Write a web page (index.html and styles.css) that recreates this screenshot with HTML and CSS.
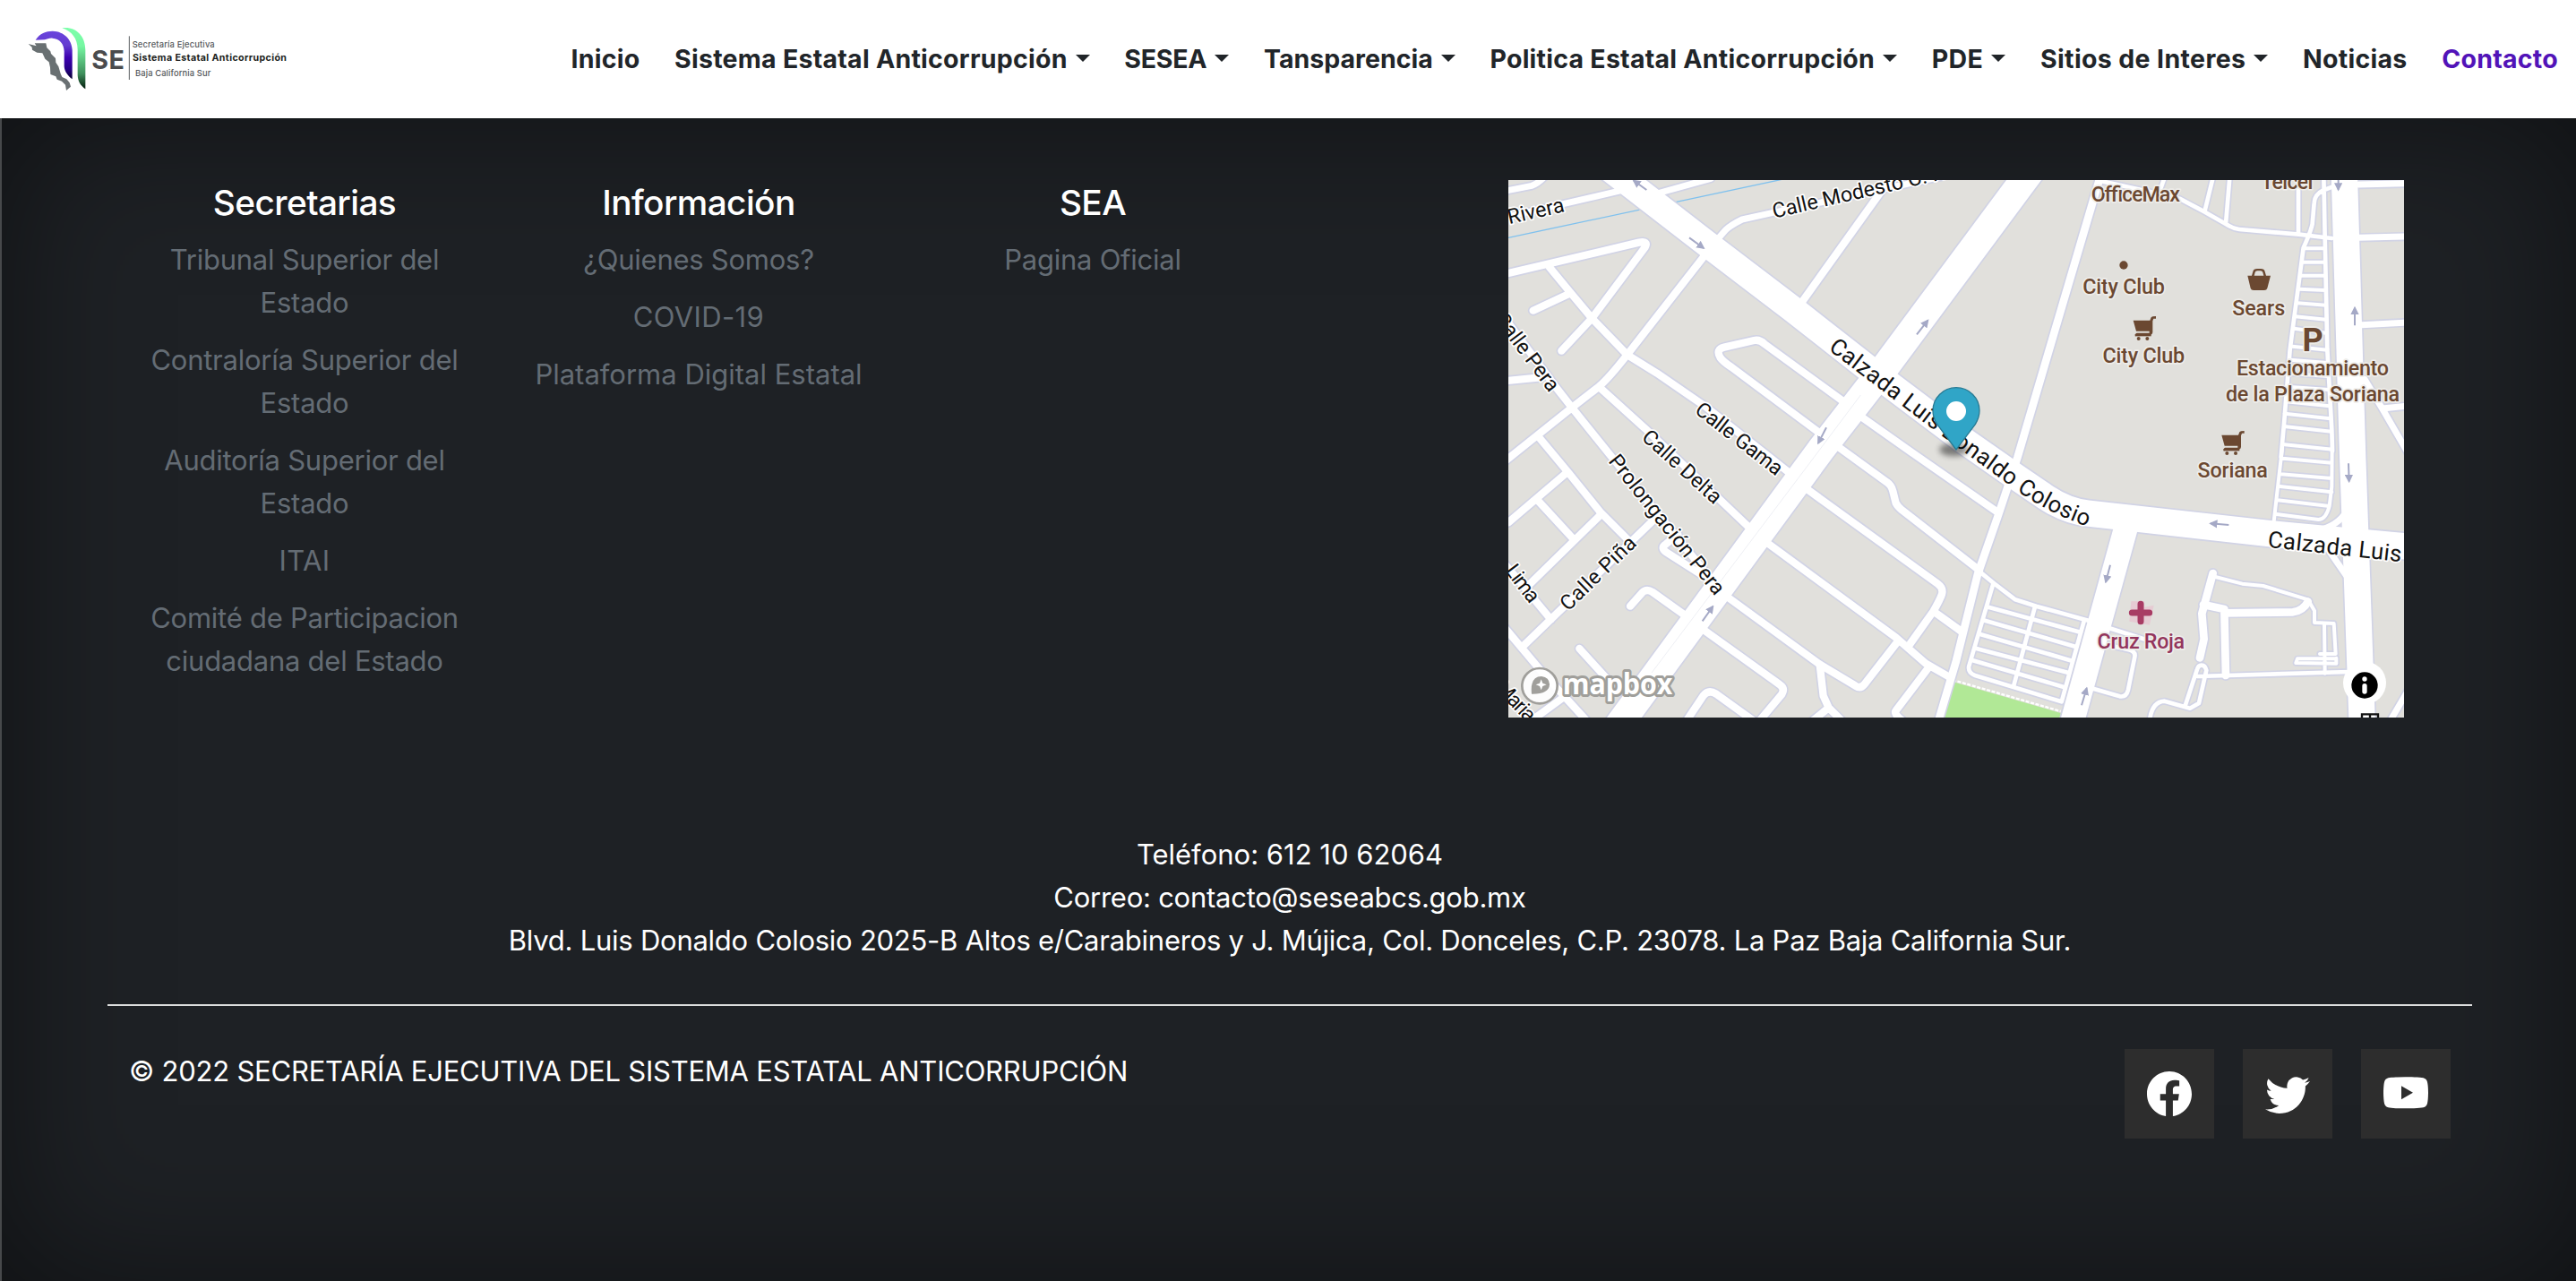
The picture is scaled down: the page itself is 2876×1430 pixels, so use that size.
FILE: index.html
```html
<!DOCTYPE html>
<html lang="es">
<head>
<meta charset="utf-8">
<title>Contacto - SESEA BCS</title>
<link rel="stylesheet" href="styles.css">
</head>
<body>
<header class="navbar">
  <a class="brand" href="#">
    <svg class="brand-logo" viewBox="0 0 1200 396">
      <defs>
        <linearGradient id="violet" x1="0" y1="0" x2="0" y2="1"><stop offset="0" stop-color="#6a45dc"/><stop offset=".3" stop-color="#643bd0"/><stop offset=".55" stop-color="#3d00b0"/><stop offset=".8" stop-color="#250085"/><stop offset="1" stop-color="#07002c"/></linearGradient>
        <linearGradient id="green" x1="0" y1="0" x2="0" y2="1"><stop offset="0" stop-color="#7dffab"/><stop offset=".3" stop-color="#76f7a2"/><stop offset=".75" stop-color="#3f8f5c"/><stop offset="1" stop-color="#031c0c"/></linearGradient>
      </defs>
      <path fill="url(#violet)" d="M119 134C133 112 154 104 176 104C216 105 241 134 242 168V265C228 254 216 240 215 222V172C214 145 199 130 176 128C164 127 158 132 150 133Z"/>
      <path fill="url(#green)" d="M208 94C254 88 286 120 286 168V298C270 287 261 273 260 252V166C260 128 240 105 208 94Z"/>
      <path fill="#697072" d="M95 147L122 154L116 145H154L157 160L169 172L171 180L186 195L187 209L196 223L203 247L208 258L223 265L233 277L237 290L222 303L219 284L207 272L191 266L187 256L169 249L168 226L164 208L151 197L142 178L124 176L108 167L107 158Z"/>
      <path stroke="#5c5f62" stroke-width="3" d="M433 121V267"/>
      <text class="brand-se" x="307" y="231" textLength="110">SE</text>
      <text class="brand-line" x="443" y="158" textLength="276">Secretaría Ejecutiva</text>
      <text class="brand-main" x="444" y="203" textLength="516">Sistema Estatal Anticorrupción</text>
      <text class="brand-line" x="453" y="254" textLength="253">Baja California Sur</text>
    </svg>
  </a>
  <nav class="menu">
    <a href="#">Inicio</a>
    <a href="#" class="drop">Sistema Estatal Anticorrupción</a>
    <a href="#" class="drop tight">SESEA</a>
    <a href="#" class="drop snug">Tansparencia</a>
    <a href="#" class="drop">Politica Estatal Anticorrupción</a>
    <a href="#" class="drop wide">PDE</a>
    <a href="#" class="drop wide">Sitios de Interes</a>
    <a href="#">Noticias</a>
    <a href="#" class="active">Contacto</a>
  </nav>
</header>
<footer class="footer">
  <div class="columns">
    <section class="column">
      <h5>Secretarias</h5>
      <a href="#">Tribunal Superior del Estado</a>
      <a href="#">Contraloría Superior del Estado</a>
      <a href="#">Auditoría Superior del Estado</a>
      <a href="#" class="caps">ITAI</a>
      <a href="#">Comité de Participacion ciudadana del Estado</a>
    </section>
    <section class="column">
      <h5>Información</h5>
      <a href="#">¿Quienes Somos?</a>
      <a href="#" class="caps">COVID-19</a>
      <a href="#" class="even">Plataforma Digital Estatal</a>
    </section>
    <section class="column">
      <h5>SEA</h5>
      <a href="#">Pagina Oficial</a>
    </section>
    <div class="map-holder">
      <svg class="map" viewBox="0 0 3000 1800">
        <defs>
          <marker id="head" viewBox="0 0 10 10" refX="8" refY="5" markerWidth="28" markerHeight="28" markerUnits="userSpaceOnUse" orient="auto"><path fill="#a5a9c6" d="M0 0L10 5L0 10Z"/></marker>
          <filter id="soft" x="-50%" y="-50%" width="200%" height="200%"><feGaussianBlur stdDeviation="10"/></filter>
          <path id="colosio" d="M1070 567L1436 845L1676 1020Q1796 1112 1945 1162"/>
          <g id="cart"><path d="M0 14H56L60 4Q63 0 76 0V8H68L65 16V54Q65 60 58 62H10V67H8V60Q6 58 12 56H54V50H10Z"/><path d="M6 60H60V67H6Z"/><circle cx="18" cy="75" r="6"/><circle cx="47" cy="75" r="6"/></g>
          <g id="streets">
            <g transform="translate(-42 -33)">
              <path class="w20" d="M30 70L120 52Q140 46 165 20M30 158L420 68M540 78L720 28"/>
              <path class="w20" d="M742 232L770 200Q790 182 825 165L925 143L1500 20"/>
              <path class="w24" d="M1320 30L1025 442"/>
              <path class="w24" d="M30 348L480 242Q512 236 500 258L322 496L220 605M180 325L250 410L322 496L440 618L540 680L700 790L985 1015M125 470L250 412"/>
              <path class="w24" d="M700 285L440 618Q380 695 345 725L255 795L30 975M30 706L140 695M30 495L200 725L255 795L400 975L770 1430M145 895L245 1015L350 1145L445 1240M345 725L500 865L850 1198"/>
              <path class="w24" d="M1165 775L900 582Q884 566 865 570L765 593Q735 600 752 628Q760 640 790 660L1085 880M1230 830L1400 950L1680 1145M1145 925L1310 1045Q1325 1055 1330 1075L1340 1115Q1345 1125 1360 1138L1620 1340"/>
            </g>
            <g transform="translate(-42 897)">
              <path class="w24" d="M1045 140L1480 455Q1500 470 1494 490Q1488 508 1465 548L1385 660M905 315L1340 635L1440 722L1515 765M1470 550L1560 615M770 495L1085 725L1205 797Q1222 808 1236 790L1345 650"/>
              <path class="w24" d="M1085 725L1097 830L1115 870L1160 915M1115 870L1060 915M690 605L950 792Q970 805 958 825L885 912M640 912L695 830Q712 808 738 824L860 912M450 530L490 485Q505 470 525 483L630 558"/>
              <path class="w24" d="M530 240L90 665M42 250L235 85M350 225L110 460M140 175L255 300M30 388L185 575M30 602L150 745L310 920M280 672L410 815M220 840L110 920M610 290L570 322Q548 335 575 352L690 425M1450 735L1340 880Q1332 890 1360 912"/>
            </g>
            <path class="w26" d="M1985 -20L1705 930L1640 1125L1572 1320L1500 1610L1438 1820"/>
            <g transform="translate(1488 -33)">
              <path class="w14" d="M505 38L660 72L760 95L845 140L915 180Q940 196 960 198L1160 215L1270 228M710 25L692 75M872 25L845 135M928 25L915 180M1158 40V215M1243 20L1247 225L1255 600L1270 870L1272 940M1300 45L1240 68Q1212 82 1211 110L1205 180Q1200 205 1175 260L1130 600L1110 850L1100 960"/>
              <path class="w12" d="M1180 262H1245M1175 308H1248M1165 353H1248M1160 398L1250 402M1155 445L1250 452M1148 490L1250 500M1143 530L1250 545M1138 590L1255 602M1130 635L1255 645M1125 680L1258 690M1120 725L1260 735M1118 775L1262 790M1112 815L1265 832M1110 858L1268 875M1105 918L1272 935"/>
              <path class="w20" d="M1360 48L1520 44M1360 226L1520 222M1370 518L1520 510M1380 700L1440 800L1530 955M1440 798L1520 790"/>
            </g>
            <g transform="translate(1488 897)">
              <path class="w12" d="M1104 0L1075 255M1271 0L1270 130L1262 195Q1250 240 1225 240L1085 222M1105 35L1270 50M1100 88L1270 102M1090 128L1270 148M1088 175L1262 195"/>
              <path class="w14" d="M85 410L140 455L210 508L280 530L460 580M136 455L55 730Q50 752 75 762L365 850L440 580M275 535L205 795M120 533L430 618M108 578L410 665M95 625L400 713M80 672L385 752M68 712L370 800"/>
              <path class="w14" d="M530 605L640 640M520 660L590 676Q614 682 610 700L588 810Q582 836 560 832L460 803M660 912Q668 850 710 848L795 872L825 855L850 745Q846 728 834 728Q822 728 818 745L780 860M820 765L1330 750"/>
              <path class="w26" d="M872 420L835 555L842 640L828 703M840 525L910 540L915 762M912 553L1140 550Q1175 544 1190 515"/>
              <path class="w12" d="M880 432L970 455L1040 462L1190 508L1212 545V585L1277 588L1283 690H1230M1245 590L1247 755M1285 706H1155L1150 720L1285 722V704"/>
              <path class="w20" d="M1320 212Q1290 262 1220 278M1265 350L1320 430M1465 915L1530 805"/>
              <path class="w78" d="M582 262L400 920"/>
            </g>
            <path class="w88" d="M2800 -20L2828 927L2860 1830"/>
            <path class="w88" d="M340 -38L667 215L952 432L1202 628L1530 875L1680 980L1800 1062Q1870 1108 1940 1116L2550 1184L3020 1228"/>
            <path class="w94" d="M1760 -45L1265 622L1045 905L370 1825"/>
          </g>
        </defs>
        <rect width="3000" height="1800" fill="#e1e0dc"/>
        <path stroke="#7fc1ee" stroke-width="4" d="M0 193L930 -5"/>
        <path fill="#b1e896" d="M1488 1680L1850 1785V1800H1452Z"/>
        <path stroke="#fff" stroke-width="7" stroke-dasharray="12 5" d="M1488 1674L1850 1779"/>
        <use href="#streets" class="casing"/>
        <use href="#streets" class="surface"/>
        <path fill="none" stroke="#e6e7ee" stroke-width="2" d="M1180 720L1000 960L480 1650"/>
        <path fill="#e6cbd3" d="M2086 1411L2130 1410V1430L2162 1424L2148 1490L2080 1478Z"/>
        <g class="arrows">
          <path d="M463 33L420 2"/><path d="M606 193L654 228"/><path d="M1368 517L1405 470"/><path d="M1065 829L1038 881"/><path d="M2780 -20V32"/><path d="M2835 487V428"/><path d="M2814 949L2816 1009"/><path d="M2413 1155L2352 1150"/><path d="M2016 1289L2001 1346"/><path d="M1920 1759L1937 1702"/><path d="M650 1477L685 1428"/>
        </g>
        <g class="road-name" transform="translate(-47 -34)">
          <text textLength="193" transform="translate(50 182) rotate(-13)">Rivera</text>
          <text textLength="590" transform="translate(937 162) rotate(-13)">Calle Modesto C. R</text>
          <text textLength="310" transform="translate(-2 500) rotate(53)">Calle Pera</text>
          <text textLength="350" transform="translate(668 811) rotate(38)">Calle Gama</text>
          <text textLength="332" transform="translate(490 900) rotate(42)">Calle Delta</text>
          <text textLength="578" transform="translate(380 976) rotate(51.5)">Prolongación Pera</text>
          <text textLength="324" transform="translate(247 1480) rotate(-44)">Calle Piña</text>
          <text textLength="140" transform="translate(35 1343) rotate(53)">Lima</text>
          <text textLength="160" transform="translate(0 1738) rotate(46)">Maria</text>
        </g>
        <g class="road-name main">
          <text textLength="1056"><textPath href="#colosio" textLength="1056">Calzada Luis Donaldo Colosio</textPath></text>
          <text textLength="450" transform="translate(2542 1229) rotate(6.3)">Calzada Luis</text>
        </g>
        <g class="poi" transform="translate(1488 -33)">
          <text x="613" y="105" textLength="298">OfficeMax</text>
          <text x="1120" y="62" textLength="175">Telcel</text>
          <text x="573" y="413" textLength="275">City Club</text>
          <text x="640" y="645" textLength="275">City Club</text>
          <text x="1025" y="485" textLength="177">Sears</text>
          <text x="1206" y="605" class="parking">P</text>
          <text x="1206" y="687" textLength="510">Estacionamiento</text>
          <text x="1206" y="773" textLength="582">de la Plaza Soriana</text>
          <text x="938" y="1030" textLength="235">Soriana</text>
          <text x="631" y="1602" textLength="293" class="health">Cruz Roja</text>
          <circle cx="573" cy="318" r="14"/>
          <use href="#cart" x="605" y="489"/>
          <use href="#cart" x="901" y="873"/>
          <path d="M988 353H1002L1006 340Q1008 330 1020 330H1032Q1044 330 1046 340L1050 353H1065L1054 395Q1052 402 1044 402H1008Q1000 402 998 395ZM1010 353H1042L1039 342Q1038 337 1031 337H1021Q1014 337 1013 342Z"/>
        </g>
        <path class="cross" d="M2118 1420V1478M2089 1449H2147"/>
        <ellipse cx="1492" cy="903" rx="48" ry="22" opacity=".45" filter="url(#soft)"/>
        <path fill="#30a5c7" stroke="#287b94" stroke-width="4" d="M1500 903L1434 815Q1422 795 1422 772A78 77 0 0 1 1578 772Q1578 795 1564 818Z"/>
        <circle cx="1500" cy="774" r="33" fill="#fff"/>
        <g transform="translate(-42 897)">
          <circle cx="147" cy="797" r="59" fill="#fff" fill-opacity=".9" stroke="#a09f9b" stroke-width="8"/>
          <path fill="#a09f9b" d="M120 824Q114 765 153 765Q180 768 180 793Q178 825 120 824Z"/>
          <path fill="#fff" d="M152 775L157 788L170 793L157 798L152 811L147 798L134 793L147 788Z"/>
          <text class="mapbox" x="224" y="826" textLength="368" lengthAdjust="spacingAndGlyphs">mapbox</text>
        </g>
        <g transform="translate(1488 897)">
          <circle cx="1380" cy="787" r="72" fill="#fff"/>
          <circle cx="1380" cy="795" r="44"/>
          <circle cx="1380" cy="774" r="8" fill="#fff"/>
          <path stroke="#fff" stroke-width="16" stroke-linecap="round" d="M1380 797V816"/>
          <path fill="none" stroke="#111" stroke-width="7" d="M1371 906V892H1425V906M1398 892V906"/>
        </g>
      </svg>
    </div>
  </div>
  <address class="contact">
    <p class="even">Teléfono: 612 10 62064</p>
    <p>Correo: contacto@seseabcs.gob.mx</p>
    <p>Blvd. Luis Donaldo Colosio 2025-B Altos e/Carabineros y J. Mújica, Col. Donceles, C.P. 23078. La Paz Baja California Sur.</p>
  </address>
  <div class="bottom">
    <p>© 2022 SECRETARÍA EJECUTIVA DEL SISTEMA ESTATAL ANTICORRUPCIÓN</p>
    <div class="social">
      <a href="#"><svg viewBox="0 0 16 16"><path d="M16 8.049c0-4.446-3.582-8.05-8-8.05C3.58 0-.002 3.603-.002 8.05c0 4.017 2.926 7.347 6.75 7.951v-5.625h-2.03V8.05H6.75V6.275c0-2.017 1.195-3.131 3.022-3.131.876 0 1.791.157 1.791.157v1.98h-1.009c-.993 0-1.303.621-1.303 1.258v1.51h2.218l-.354 2.326H9.25V16c3.824-.604 6.75-3.934 6.75-7.951z"/></svg></a>
      <a href="#"><svg viewBox="0 0 16 16"><path d="M5.026 15c6.038 0 9.341-5.003 9.341-9.334 0-.14 0-.282-.006-.422A6.685 6.685 0 0 0 16 3.542a6.658 6.658 0 0 1-1.889.518 3.301 3.301 0 0 0 1.447-1.817 6.533 6.533 0 0 1-2.087.793A3.286 3.286 0 0 0 7.875 6.03a9.325 9.325 0 0 1-6.767-3.429 3.289 3.289 0 0 0 1.018 4.382A3.323 3.323 0 0 1 .64 6.575v.045a3.288 3.288 0 0 0 2.632 3.218 3.203 3.203 0 0 1-.865.115 3.23 3.23 0 0 1-.614-.057 3.283 3.283 0 0 0 3.067 2.277A6.588 6.588 0 0 1 .78 13.58a6.32 6.32 0 0 1-.78-.045A9.344 9.344 0 0 0 5.026 15z"/></svg></a>
      <a href="#"><svg viewBox="0 0 16 16"><path d="M8.051 1.999h.089c.822.003 4.987.033 6.11.335a2.01 2.01 0 0 1 1.415 1.42c.101.38.172.883.22 1.402l.01.104.022.26.008.104c.065.914.073 1.77.074 1.957v.075c-.001.194-.01 1.108-.082 2.06l-.008.105-.009.104c-.05.572-.124 1.14-.235 1.558a2.007 2.007 0 0 1-1.415 1.42c-1.16.312-5.569.334-6.18.335h-.142c-.309 0-1.587-.006-2.927-.052l-.17-.006-.087-.004-.171-.007-.171-.007c-1.11-.049-2.167-.128-2.654-.26a2.007 2.007 0 0 1-1.415-1.419c-.111-.417-.185-.986-.235-1.558L.09 9.82l-.008-.104A31.4 31.4 0 0 1 0 7.68v-.123c.002-.215.01-.958.064-1.778l.007-.103.003-.052.008-.104.022-.26.01-.104c.048-.519.119-1.023.22-1.402a2.007 2.007 0 0 1 1.415-1.42c.487-.13 1.544-.21 2.654-.26l.17-.007.172-.006.086-.003.171-.007A99.788 99.788 0 0 1 7.858 2h.193zM6.4 5.209v4.818l4.157-2.408L6.4 5.209z"/></svg></a>
    </div>
  </div>
</footer>
</body>
</html>
```
FILE: styles.css
```css
* { box-sizing: border-box; }
body { margin: 0; height: 1430px; display: flex; flex-direction: column; font-family: Inter, sans-serif; background: #47494b; }
a { color: inherit; text-decoration: none; }
p, h5 { margin: 0; }

.navbar { height: 132px; flex: none; display: flex; justify-content: space-between; align-items: center; padding-right: 20px; background: #fff; }
.brand-logo { display: block; width: 400px; height: 132px; }
.brand-se { font: 700 86px Inter, sans-serif; fill: #4a4b4d; }
.brand-line { font: 500 28px Inter, sans-serif; fill: #55585b; }
.brand-main { font: 700 32px Inter, sans-serif; fill: #1d1f21; }

.menu { display: flex; gap: 38.7px; font-size: 28.5px; font-weight: 700; line-height: 48px; letter-spacing: .25px; color: #212529; white-space: nowrap; }
.menu .tight { letter-spacing: -.24px; }
.menu .snug { letter-spacing: 0; }
.menu .wide { letter-spacing: .37px; }
.menu .active { color: #5213b8; }
.drop { display: flex; align-items: center; gap: 9px; }
.drop::after { content: ""; border: 8px solid transparent; border-top-color: currentColor; border-bottom: 0; margin-top: -3px; }

.footer { flex: 1; margin-left: 2px; padding: 69px 116px 0 118px; background: #1e2125; box-shadow: inset 0 0 165px rgba(0, 0, 0, .5); color: #fff; font-size: 31px; line-height: 48px; letter-spacing: -.25px; }
.columns { display: grid; grid-template-columns: 440px 440px 440px 1fr; }
.column { display: flex; flex-direction: column; gap: 16px; padding: 1px 24px 0; text-align: center; color: #646c74; }
.column h5 { color: #fff; font-size: 38.8px; font-weight: 500; letter-spacing: -.6px; }
.column .caps { letter-spacing: .35px; }
.footer .even { letter-spacing: 0; }

.map-holder { padding-left: 244px; }
.map { display: block; width: 1000px; height: 600px; }
.casing, .surface { fill: none; stroke-linecap: round; stroke-linejoin: round; }
.casing { stroke: #d1d3e5; --edge: 10px; }
.surface { stroke: #fff; --edge: 0px; }
.w12 { stroke-width: calc(12px + var(--edge)); }
.w14 { stroke-width: calc(14px + var(--edge)); }
.w20 { stroke-width: calc(21px + var(--edge)); }
.w24 { stroke-width: calc(25px + var(--edge)); }
.w26 { stroke-width: calc(26px + var(--edge)); }
.w78 { stroke-width: calc(80px + var(--edge)); }
.w88 { stroke-width: calc(88px + var(--edge)); }
.w94 { stroke-width: calc(94px + var(--edge)); }
.arrows path { stroke: #a5a9c6; stroke-width: 6px; marker-end: url(#head); }
.map text { stroke: #fff; stroke-width: 10px; stroke-linejoin: round; paint-order: stroke; letter-spacing: 0; }
.road-name { font: 400 70px Roboto, sans-serif; fill: #111; }
.road-name.main { font-size: 77px; }
.poi { font: 500 70px Roboto, sans-serif; fill: #6b4831; text-anchor: middle; }
.map .poi text { stroke: #eeedea; }
.poi .parking { font-size: 108px; font-weight: 700; }
.poi .health { fill: #93355c; }
.cross { stroke: #a83c64; stroke-width: 21px; stroke-linecap: round; }
.map .mapbox { font: 700 98px "Open Sans", sans-serif; fill: #fff; stroke: #a09f9b; stroke-width: 18px; }

.contact { margin-top: 129px; padding-bottom: 47px; border-bottom: 2px solid #dcdddd; font-style: normal; text-align: center; }
.bottom { display: flex; justify-content: space-between; padding: 48px 24px 0 24px; }
.bottom p { padding-top: 1px; letter-spacing: -.23px; }
.social { display: flex; gap: 32px; }
.social a { width: 100px; height: 100px; padding: 25px; background: #2d2d2d; }
.social svg { display: block; width: 50px; height: 50px; fill: #fff; }
```
